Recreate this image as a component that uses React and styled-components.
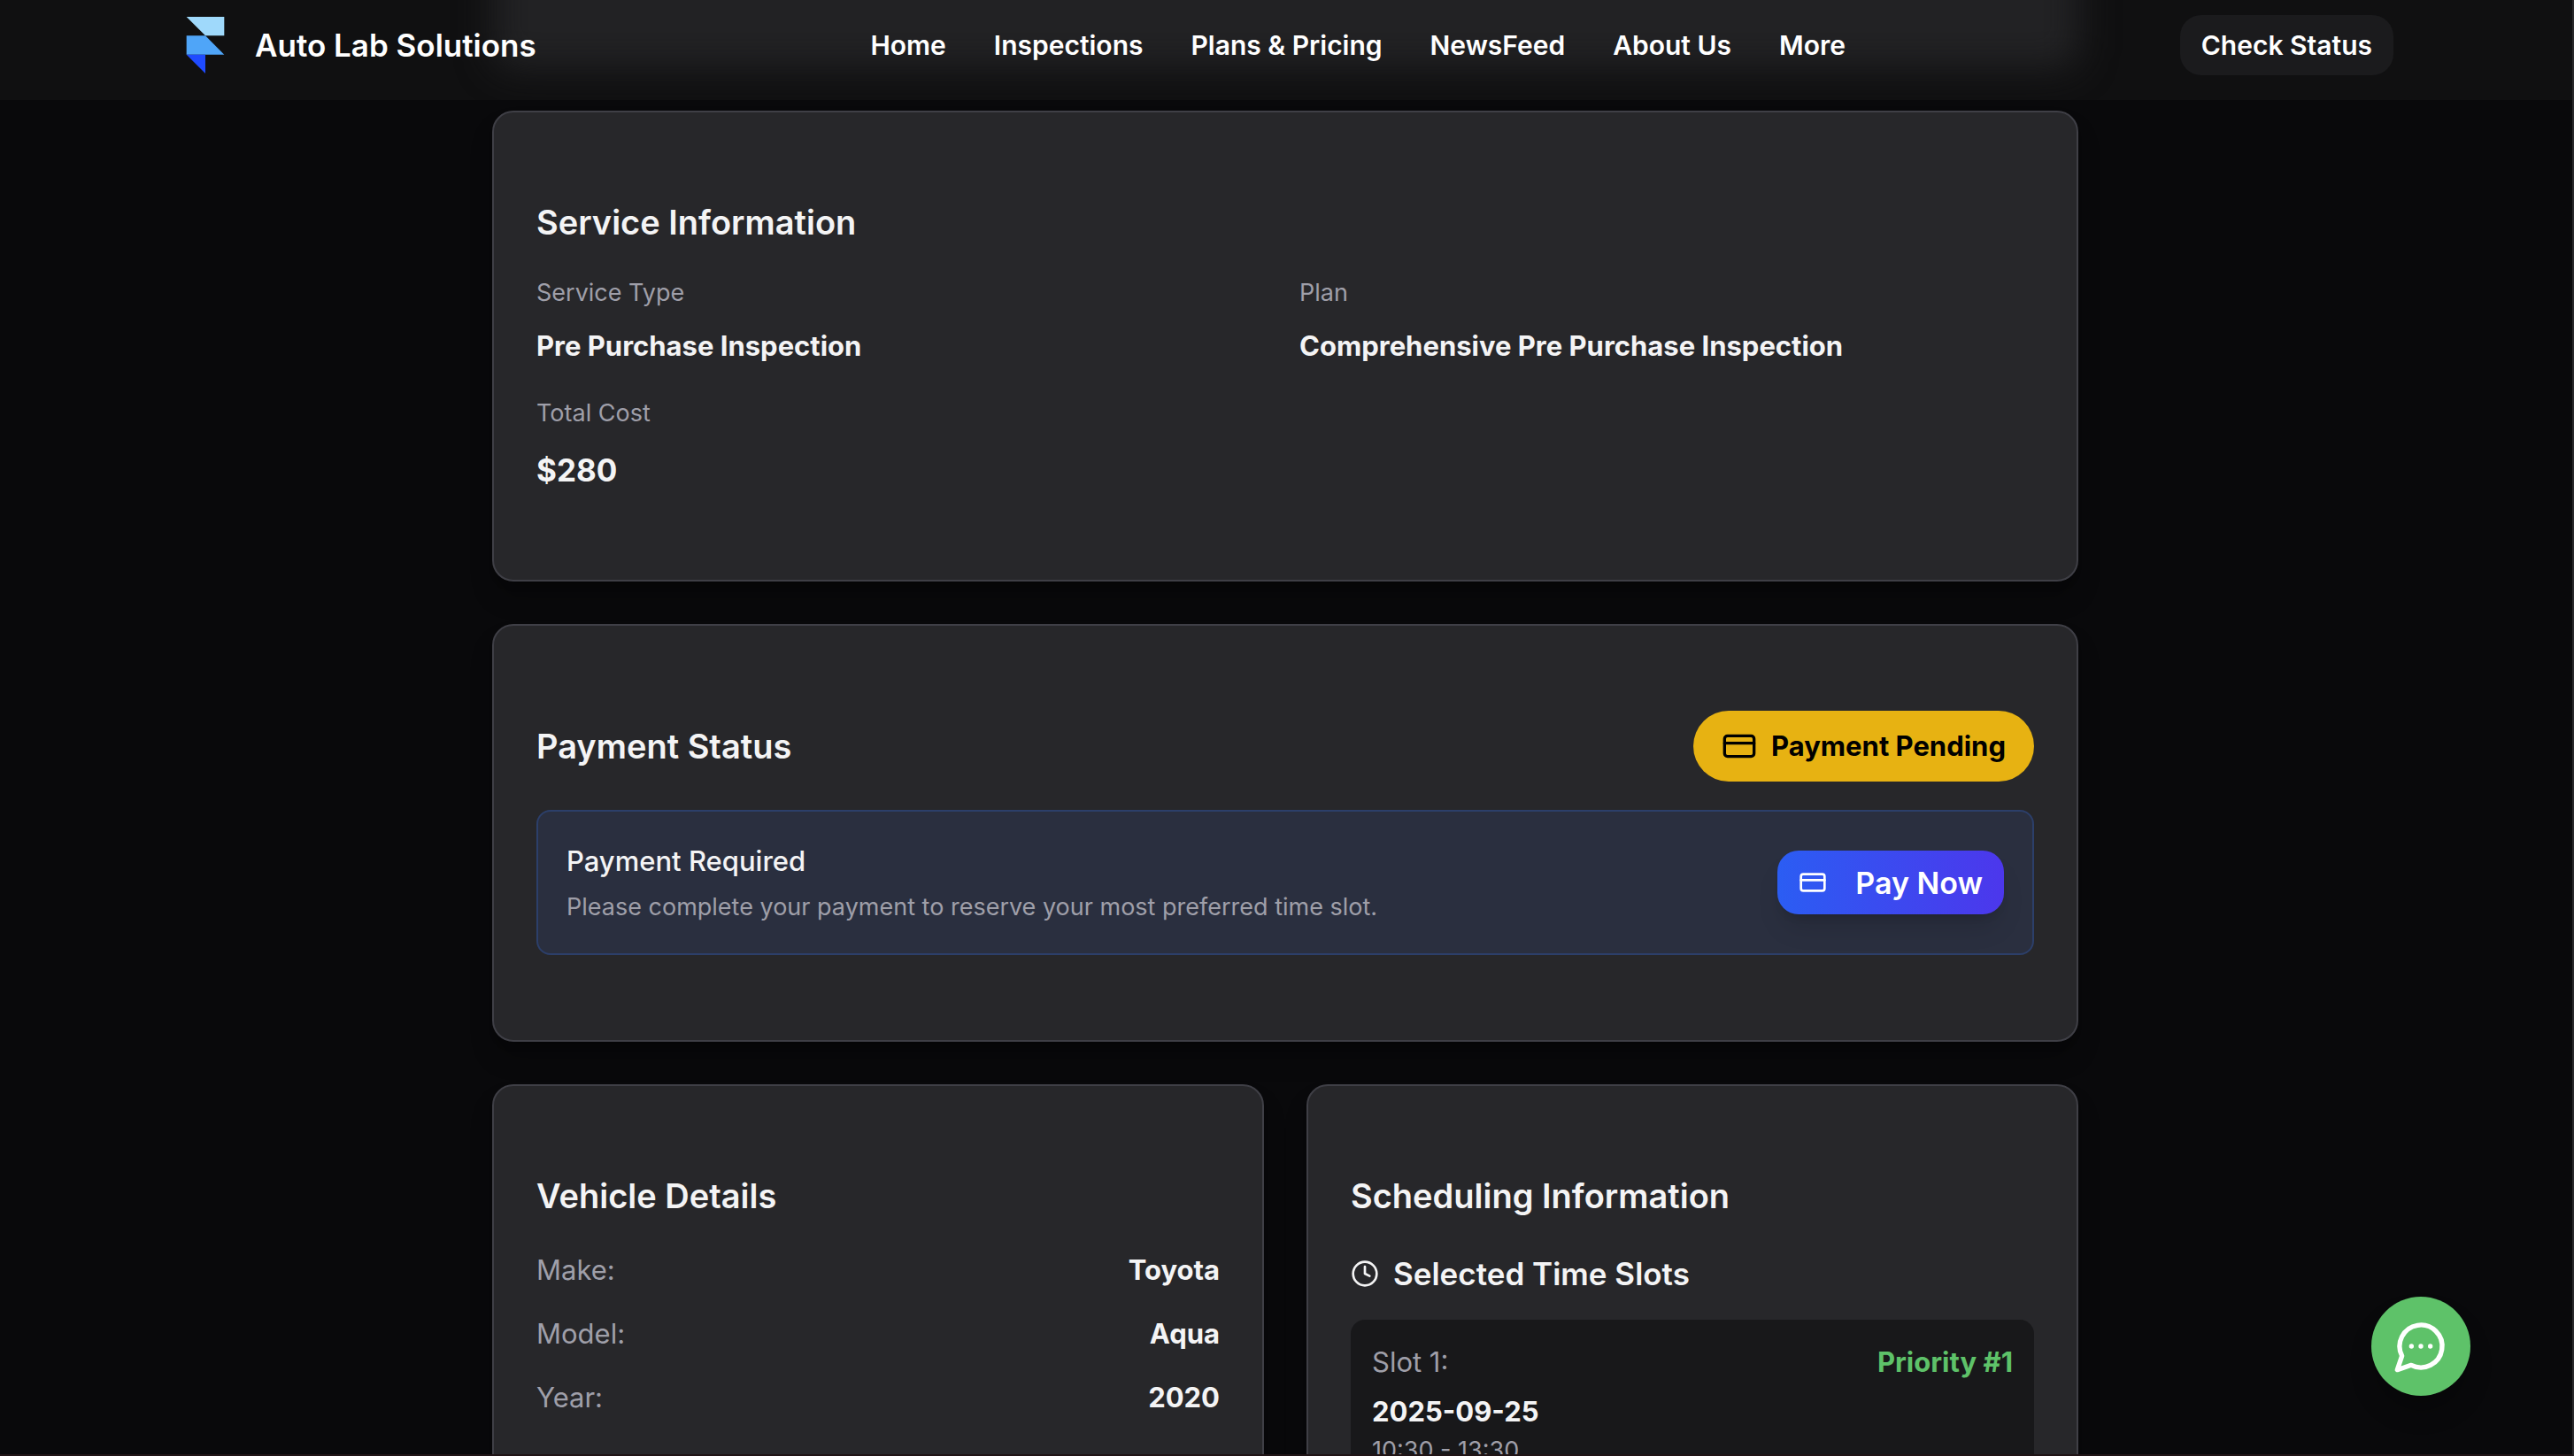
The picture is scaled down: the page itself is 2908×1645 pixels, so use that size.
import React from 'react';
import styled, { createGlobalStyle, css } from 'styled-components';
import { CreditCard, Clock } from 'lucide-react';

const GlobalStyle = createGlobalStyle`
  *, *::before, *::after { box-sizing: border-box; }
  body {
    margin: 0;
    background: #09090b;
    color: #f4f4f5;
    font-family: Inter, "Liberation Sans", sans-serif;
    font-size: 31px;
    line-height: 48px;
  }
  h2, h3, p, dl, dt, dd, ul { margin: 0; padding: 0; }
  a { color: inherit; text-decoration: none; }
  button { font-family: inherit; border: 0; cursor: pointer; }
`;

const Page = styled.div`
  height: 100vh;
  overflow: hidden;
  border-right: 2px solid #29292b;
  border-bottom: 2px solid #201416;
  padding-right: 2px;
`;

const Header = styled.header`
  position: sticky;
  top: 0;
  z-index: 10;
  height: 113px;
  margin-right: -2px;
  padding: 17px 30px 28px 28px;
  overflow: hidden;
  background: #101011;
`;

/* Frosted silhouette of the card that has scrolled under the header. */
const HeaderGlow = styled.div`
  position: absolute;
  inset: -100px 0 36px;
  max-width: 1792px;
  margin: 0 auto;
  border-radius: 24px;
  background: #222224;
  filter: blur(20px);
`;

const HeaderInner = styled.div`
  position: relative;
  display: flex;
  align-items: center;
  justify-content: space-between;
  max-width: 2504px;
  margin: 0 auto;
`;

const Brand = styled.a`
  display: flex;
  align-items: center;
  gap: 24px;
  font-size: 35px;
  font-weight: 600;
  color: #fff;
`;

const NavList = styled.ul`
  display: flex;
  gap: 54px;
  list-style: none;
`;

const navText = css`
  font-size: 30px;
  font-weight: 600;
  color: #fff;
`;

const NavLink = styled.a`
  ${navText}
`;

const StatusButton = styled.button`
  ${navText}
  height: 68px;
  padding: 0 24px;
  border-radius: 24px;
  background: #1b1b1d;
`;

const Main = styled.main`
  display: flex;
  flex-direction: column;
  gap: 48px;
  max-width: 1792px;
  margin: 12px auto 0;
`;

const Card = styled.section`
  padding: 96px 48px;
  border: 2px solid #3f3f46;
  border-radius: 24px;
  background: #27272a;
  box-shadow: 0 20px 30px -6px rgba(0, 0, 0, 0.3), 0 8px 12px -8px rgba(0, 0, 0, 0.3);
`;

const Title = styled.h2`
  font-size: 38px;
  font-weight: 600;
  line-height: 56px;
`;

const Subtitle = styled.h3`
  display: flex;
  align-items: center;
  gap: 16px;
  margin-bottom: 24px;
  font-size: 35px;
  font-weight: 600;
  line-height: 56px;
`;

const Columns = styled.div`
  display: grid;
  grid-template-columns: repeat(2, minmax(0, 1fr));
  gap: 48px;
`;

const ServiceList = styled.dl`
  display: grid;
  grid-template-columns: repeat(2, minmax(0, 1fr));
  gap: 32px;
  margin-top: 32px;
`;

const Field = styled.div`
  display: grid;
  gap: 16px;
`;

const SmallText = styled.p`
  font-size: 27px;
  line-height: 40px;
  color: #9f9fa9;
`;

const FieldValue = styled.dd`
  font-weight: 700;
  ${(p) => p.$large && css`
    font-size: 35px;
    line-height: 56px;
  `}
`;

const SplitRow = styled.div`
  display: flex;
  align-items: center;
  justify-content: space-between;
`;

const PendingBadge = styled.span`
  display: flex;
  align-items: center;
  gap: 16px;
  height: 80px;
  padding: 0 32px;
  border-radius: 40px;
  background: #e7b212;
  color: #000;
  font-weight: 700;
`;

const Notice = styled(SplitRow)`
  margin-top: 32px;
  padding: 32px;
  border: 2px solid #2c3f6a;
  border-radius: 16px;
  background: #2a2f3f;
`;

const NoticeTitle = styled.h3`
  margin-bottom: 8px;
  font-size: 31px;
  font-weight: 500;
  line-height: 48px;
`;

const PayButton = styled.button`
  display: flex;
  align-items: center;
  gap: 32px;
  height: 72px;
  padding: 0 24px;
  border-radius: 24px;
  background: linear-gradient(to right, #2b5df3, #4c37ec);
  box-shadow: 0 20px 30px -6px rgba(0, 0, 0, 0.12), 0 8px 12px -8px rgba(0, 0, 0, 0.2);
  color: #fff;
  font-size: 34px;
  font-weight: 600;
`;

const DetailList = styled.dl`
  display: grid;
  gap: 24px;
  margin-top: 32px;
`;

const DetailTerm = styled.dt`
  color: #9f9fa9;
`;

const Schedule = styled.div`
  margin-top: 32px;
`;

const Slot = styled.div`
  padding: 24px;
  border-radius: 16px;
  background: #18181a;
`;

const SlotLabel = styled.span`
  color: #9f9fa9;
`;

const Priority = styled.span`
  color: #5ec269;
  font-weight: 700;
`;

const SlotDate = styled.p`
  margin-top: 8px;
  font-weight: 700;
`;

const ChatButton = styled.button`
  position: fixed;
  right: 117px;
  bottom: 68px;
  z-index: 20;
  display: grid;
  place-items: center;
  width: 112px;
  height: 112px;
  padding: 0;
  border-radius: 50%;
  background: #5ec269;
  color: #fff;
  box-shadow: 0 20px 30px -6px rgba(0, 0, 0, 0.3);
`;

const navItems = ['Home', 'Inspections', 'Plans & Pricing', 'NewsFeed', 'About Us', 'More'];

const vehicle = [
  ['Make:', 'Toyota'],
  ['Model:', 'Aqua'],
  ['Year:', '2020'],
];

function Logo() {
  return (
    <svg width="64" height="64" viewBox="0 0 24 24" aria-hidden="true">
      <path d="M4 0h16v8h-8z" fill="#9fd9fb" />
      <path d="M4 8h8l8 8H4z" fill="#4fa5f8" />
      <path d="M4 16h8v8z" fill="#1f4bff" />
    </svg>
  );
}

function ChatIcon() {
  return (
    <svg width="64" height="64" viewBox="0 0 24 24" fill="none" stroke="currentColor" strokeWidth="2" strokeLinecap="round" strokeLinejoin="round" aria-hidden="true">
      <path d="M7.9 20A9 9 0 1 0 4 16.1L2 22Z" />
      <path d="M8 12h.01M12 12h.01M16 12h.01" />
    </svg>
  );
}

export default function App() {
  return (
    <>
      <GlobalStyle />
      <Page>
        <Header>
          <HeaderGlow aria-hidden="true" />
          <HeaderInner>
            <Brand href="#home">
              <Logo />
              Auto Lab Solutions
            </Brand>
            <nav>
              <NavList>
                {navItems.map((item) => (
                  <li key={item}><NavLink href="#">{item}</NavLink></li>
                ))}
              </NavList>
            </nav>
            <StatusButton type="button">Check Status</StatusButton>
          </HeaderInner>
        </Header>

        <Main>
          <Card>
            <Title>Service Information</Title>
            <ServiceList>
              <Field>
                <SmallText as="dt">Service Type</SmallText>
                <FieldValue>Pre Purchase Inspection</FieldValue>
              </Field>
              <Field>
                <SmallText as="dt">Plan</SmallText>
                <FieldValue>Comprehensive Pre Purchase Inspection</FieldValue>
              </Field>
              <Field>
                <SmallText as="dt">Total Cost</SmallText>
                <FieldValue $large>$280</FieldValue>
              </Field>
            </ServiceList>
          </Card>

          <Card>
            <SplitRow>
              <Title>Payment Status</Title>
              <PendingBadge>
                <CreditCard size={40} aria-hidden="true" />
                Payment Pending
              </PendingBadge>
            </SplitRow>
            <Notice>
              <div>
                <NoticeTitle>Payment Required</NoticeTitle>
                <SmallText>Please complete your payment to reserve your most preferred time slot.</SmallText>
              </div>
              <PayButton type="button">
                <CreditCard size={32} aria-hidden="true" />
                Pay Now
              </PayButton>
            </Notice>
          </Card>

          <Columns>
            <Card>
              <Title>Vehicle Details</Title>
              <DetailList>
                {vehicle.map(([term, value]) => (
                  <SplitRow key={term}>
                    <DetailTerm>{term}</DetailTerm>
                    <FieldValue>{value}</FieldValue>
                  </SplitRow>
                ))}
              </DetailList>
            </Card>

            <Card>
              <Title>Scheduling Information</Title>
              <Schedule>
                <Subtitle>
                  <Clock size={32} aria-hidden="true" />
                  Selected Time Slots
                </Subtitle>
                <Slot>
                  <SplitRow>
                    <SlotLabel>Slot 1:</SlotLabel>
                    <Priority>Priority #1</Priority>
                  </SplitRow>
                  <SlotDate>2025-09-25</SlotDate>
                  <SmallText>10:30 - 13:30</SmallText>
                </Slot>
              </Schedule>
            </Card>
          </Columns>
        </Main>

        <ChatButton type="button" aria-label="Open chat">
          <ChatIcon />
        </ChatButton>
      </Page>
    </>
  );
}
